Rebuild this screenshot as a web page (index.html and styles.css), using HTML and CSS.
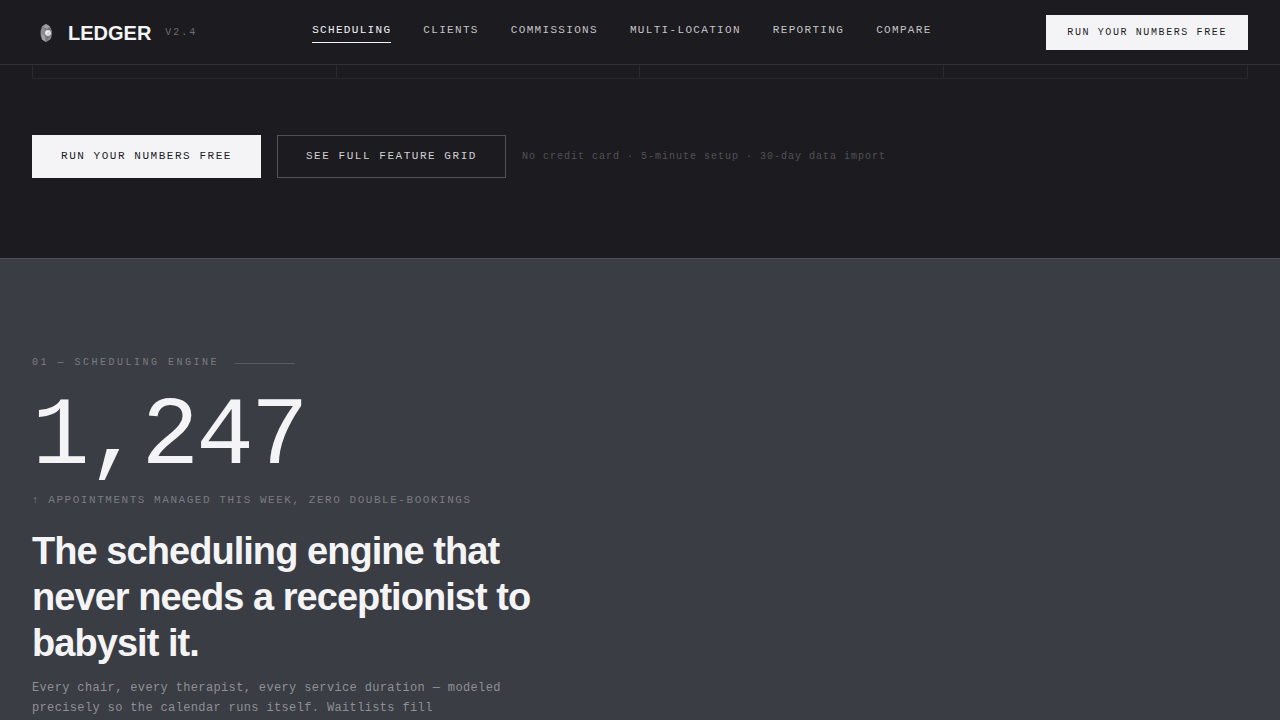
FILE: index.html
```html
<!DOCTYPE html>
<html lang="en">
<head>
<meta charset="utf-8">
<meta name="viewport" content="width=device-width, initial-scale=1">
<title>Ledger</title>
<link rel="stylesheet" href="styles.css">
</head>
<body>
<header class="site-header">
  <a class="brand" href="#">
    <svg class="brand-mark" viewBox="0 0 28 28" aria-hidden="true">
      <path d="M14 5l4 2.500 2 4.500v4l-2 4.500-4 2.500-4-2.500-1.500-4.500v-4l1.500-4.500z" fill="#77777b"/>
      <path d="M14 5l4 2.500-3 2.500-5-2.500zM9 14l4 3 1 6-4-2.500z" fill="#a0a0a4"/>
      <path d="M10 8l4 3-1 6-4-3zM18 17l1.500 1-1.500 2.500-4 2.500z" fill="#8c8c90"/>
      <circle cx="16" cy="14" r="3" fill="#dcdce0"/>
      <circle cx="15.500" cy="13.500" r="1.500" fill="#fff"/>
      <circle cx="16" cy="14" r="0.700" fill="#88888c"/>
    </svg>
    <span class="brand-name">LEDGER</span>
    <span class="brand-version">V2.4</span>
  </a>
  <nav class="nav" aria-label="Features">
    <a class="nav-link nav-link-active" href="#scheduling">SCHEDULING</a>
    <a class="nav-link" href="#clients">CLIENTS</a>
    <a class="nav-link" href="#commissions">COMMISSIONS</a>
    <a class="nav-link" href="#locations">MULTI-LOCATION</a>
    <a class="nav-link" href="#reporting">REPORTING</a>
    <a class="nav-link" href="#compare">COMPARE</a>
  </nav>
  <button class="button button-small" type="button">RUN YOUR NUMBERS FREE</button>
</header>
<main class="page">
  <section class="hero">
    <div class="stats">
      <div class="stat"></div>
      <div class="stat"></div>
      <div class="stat"></div>
      <div class="stat"></div>
    </div>
    <div class="actions">
      <button class="button" type="button">RUN YOUR NUMBERS FREE</button>
      <button class="button button-outline" type="button">SEE FULL FEATURE GRID</button>
      <p class="note">No credit card · 5-minute setup · 30-day data import</p>
    </div>
  </section>
  <section class="feature" id="scheduling">
    <div class="feature-copy">
      <p class="eyebrow">01 — SCHEDULING ENGINE</p>
      <p class="figure">1,247</p>
      <p class="caption">↑ APPOINTMENTS MANAGED THIS WEEK, ZERO DOUBLE-BOOKINGS</p>
      <h2 class="title">The scheduling engine that never needs a receptionist to babysit it.</h2>
      <p class="description">Every chair, every therapist, every service duration — modeled precisely so the calendar runs itself. Waitlists fill</p>
    </div>
  </section>
</main>
</body>
</html>
```
FILE: styles.css
```css
*,
*::before,
*::after {
  box-sizing: border-box;
}

body {
  display: flex;
  flex-direction: column;
  min-height: 100vh;
  margin: 0;
  background: #1c1b1f;
  color: #f4f4f7;
  font-family: "Liberation Mono", monospace;
}

p,
h2 {
  margin: 0;
}

a {
  color: inherit;
  text-decoration: none;
}

.site-header {
  display: flex;
  align-items: center;
  justify-content: space-between;
  padding: 15px 32px 14px;
  border-bottom: 1px solid #323236;
}

.brand {
  display: flex;
  align-items: center;
}

.brand-mark {
  width: 28px;
  height: 28px;
  margin-right: 8px;
}

.brand-name {
  margin-right: 14px;
  font: bold 20px/24px "Liberation Sans", sans-serif;
}

.brand-version {
  color: #6c6c70;
  font-size: 10px;
  letter-spacing: 0.2em;
}

.nav {
  display: flex;
  gap: 32px;
}

.nav-link {
  padding-bottom: 4px;
  border-bottom: 1px solid transparent;
  color: #c4c4c8;
  font-size: 11px;
  line-height: 16px;
  letter-spacing: 0.12em;
}

.nav-link-active {
  border-color: #f4f4f7;
  color: #f4f4f7;
}

.button {
  padding: 14px 28px;
  border: 1px solid #f4f4f7;
  border-radius: 0;
  background: #f4f4f7;
  color: #1c1b1f;
  font-family: inherit;
  font-size: 11px;
  line-height: 13px;
  letter-spacing: 0.14em;
}

.button-small {
  padding: 11px 20px;
  font-size: 10px;
  line-height: 11px;
  letter-spacing: 0.16em;
}

.button-outline {
  border-color: #505055;
  background: transparent;
  color: #d0d0d3;
}

.page {
  display: flex;
  flex: 1;
  flex-direction: column;
}

.hero {
  padding: 0 32px 80px;
}

.stats {
  display: grid;
  grid-template-columns: repeat(4, 1fr);
  border: 1px solid #2a2a2e;
  border-top: 0;
}

.stat {
  padding-top: 13px;
}

.stat:not(:last-child) {
  border-right: 1px solid #2a2a2e;
}

.actions {
  display: flex;
  flex-wrap: wrap;
  align-items: center;
  gap: 16px;
  margin-top: 56px;
}

.note {
  color: #525256;
  font-size: 10px;
  letter-spacing: 0.1em;
}

.feature {
  flex: 1;
  padding: 96px 32px 0;
  border-top: 1px solid #4b4e56;
  background: #3a3d44;
}

.feature-copy {
  max-width: 512px;
}

.eyebrow {
  display: flex;
  align-items: center;
  gap: 16px;
  color: #7b7c80;
  font-size: 10px;
  line-height: 16px;
  letter-spacing: 0.25em;
}

.eyebrow::after {
  content: "";
  width: 60px;
  height: 1px;
  background: #5a5c62;
}

.figure {
  margin-top: 19px;
  font-size: 96px;
  line-height: 96px;
  letter-spacing: -0.03em;
}

.caption {
  margin-top: 6px;
  color: #7b7c80;
  font-size: 11px;
  line-height: 16px;
  letter-spacing: 0.14em;
}

.title {
  margin-top: 20px;
  font: bold 38px/46px "Liberation Sans", sans-serif;
  letter-spacing: -0.025em;
}

.description {
  max-width: 480px;
  margin-top: 12px;
  color: #8f9094;
  font-size: 12px;
  line-height: 20px;
  letter-spacing: 0.03em;
}
```
